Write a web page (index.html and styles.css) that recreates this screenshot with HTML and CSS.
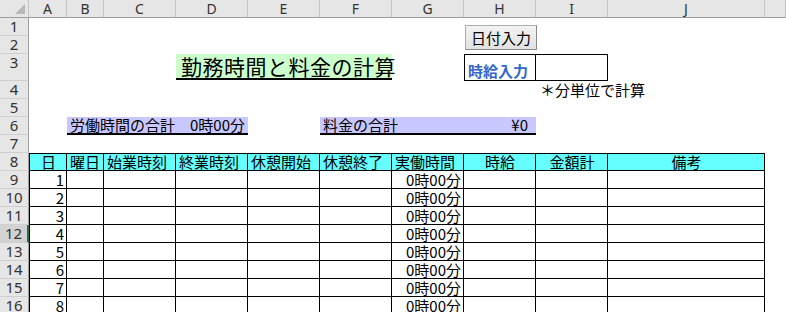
FILE: index.html
```html
<!DOCTYPE html>
<html lang="ja">
<head>
<meta charset="utf-8">
<title>勤務時間と料金の計算</title>
<link rel="stylesheet" href="styles.css">
</head>
<body>
<div class="sheet">
  <div class="row hdr">
    <div class="corner"><span class="tri"></span></div>
    <div class="ch">A</div><div class="ch">B</div><div class="ch">C</div><div class="ch">D</div><div class="ch">E</div>
    <div class="ch">F</div><div class="ch">G</div><div class="ch">H</div><div class="ch">I</div><div class="ch">J</div><div class="ch"></div>
  </div>

  <div class="row"><div class="rh">1</div><div class="rest"></div></div>
  <div class="row"><div class="rh">2</div><div class="rest"></div></div>
  <div class="row tall">
    <div class="rh">3</div>
    <div class="span3"></div>
    <div class="title span3">勤務時間と料金の計算</div>
    <div></div>
    <div class="box lbl">時給入力</div>
    <div class="box inp"></div>
  </div>
  <div class="row">
    <div class="rh">4</div>
    <div class="span8"></div>
    <div class="note span2">＊分単位で計算</div>
  </div>
  <div class="row"><div class="rh">5</div><div class="rest"></div></div>
  <div class="row">
    <div class="rh">6</div>
    <div></div>
    <div class="sum span3"><span>労働時間の合計</span><span>0時00分</span></div>
    <div></div>
    <div class="sum yen span3"><span>料金の合計</span><span>¥0</span></div>
  </div>
  <div class="row"><div class="rh">7</div><div class="rest"></div></div>

  <div class="row thead">
    <div class="rh">8</div>
    <div class="t a ctr">日</div>
    <div class="t">曜日</div>
    <div class="t">始業時刻</div>
    <div class="t">終業時刻</div>
    <div class="t">休憩開始</div>
    <div class="t">休憩終了</div>
    <div class="t">実働時間</div>
    <div class="t ctr">時給</div>
    <div class="t ctr">金額計</div>
    <div class="t ctr">備考</div>
  </div>

  <div class="row"><div class="rh">9</div><div class="t a num">1</div><div class="t"></div><div class="t"></div><div class="t"></div><div class="t"></div><div class="t"></div><div class="t num">0時00分</div><div class="t"></div><div class="t"></div><div class="t"></div></div>
  <div class="row"><div class="rh">10</div><div class="t a num">2</div><div class="t"></div><div class="t"></div><div class="t"></div><div class="t"></div><div class="t"></div><div class="t num">0時00分</div><div class="t"></div><div class="t"></div><div class="t"></div></div>
  <div class="row"><div class="rh">11</div><div class="t a num">3</div><div class="t"></div><div class="t"></div><div class="t"></div><div class="t"></div><div class="t"></div><div class="t num">0時00分</div><div class="t"></div><div class="t"></div><div class="t"></div></div>
  <div class="row"><div class="rh sel">12</div><div class="t a num">4</div><div class="t"></div><div class="t"></div><div class="t"></div><div class="t"></div><div class="t"></div><div class="t num">0時00分</div><div class="t"></div><div class="t"></div><div class="t"></div></div>
  <div class="row"><div class="rh">13</div><div class="t a num">5</div><div class="t"></div><div class="t"></div><div class="t"></div><div class="t"></div><div class="t"></div><div class="t num">0時00分</div><div class="t"></div><div class="t"></div><div class="t"></div></div>
  <div class="row"><div class="rh">14</div><div class="t a num">6</div><div class="t"></div><div class="t"></div><div class="t"></div><div class="t"></div><div class="t"></div><div class="t num">0時00分</div><div class="t"></div><div class="t"></div><div class="t"></div></div>
  <div class="row"><div class="rh">15</div><div class="t a num">7</div><div class="t"></div><div class="t"></div><div class="t"></div><div class="t"></div><div class="t"></div><div class="t num">0時00分</div><div class="t"></div><div class="t"></div><div class="t"></div></div>
  <div class="row"><div class="rh">16</div><div class="t a num">8</div><div class="t"></div><div class="t"></div><div class="t"></div><div class="t"></div><div class="t"></div><div class="t num">0時00分</div><div class="t"></div><div class="t"></div><div class="t"></div></div>

  <button class="btn" type="button">日付入力</button>
</div>
</body>
</html>
```

FILE: styles.css
```css
html, body {
  margin: 0;
  padding: 0;
  background: #ffffff;
  overflow: hidden;
}
body {
  width: 786px;
  height: 312px;
  font-family: "Noto Sans CJK JP", "Noto Sans", sans-serif;
  color: #000;
}
.sheet {
  position: relative;
  width: 786px;
}
.row {
  display: grid;
  grid-template-columns: 29px 38px 37px repeat(7, 72px) 157px 1fr;
  height: 18px;
}
.row > div {
  box-sizing: border-box;
  white-space: nowrap;
  font-size: 15px;
  line-height: 17px;
}
.row.tall { height: 27px; }

.hdr { background: #e6e6e6; }
.hdr > div {
  border-bottom: 1px solid #9d9d9d;
}
.ch {
  border-right: 1px solid #c4c4c4;
  text-align: center;
  color: #333;
  font-family: "Noto Sans", "Liberation Sans", sans-serif;
  font-size: 14px !important;
}
.corner {
  display: flex;
  justify-content: flex-end;
  align-items: flex-end;
  padding: 0 3px 3px 0;
  border-right: 1px solid #c4c4c4;
}
.tri {
  width: 10px;
  height: 10px;
  background: #b8b8b8;
  clip-path: polygon(100% 0, 100% 100%, 0 100%);
}
.rh {
  background: #e6e6e6;
  border-right: 1px solid #9d9d9d;
  border-bottom: 1px solid #cfcfcf;
  text-align: center;
  color: #333;
  font-family: "Noto Sans", "Liberation Sans", sans-serif;
}
.rh.sel {
  background: #d2d2d2;
  border-right: 2px solid #217346;
}
.rest { grid-column: 2 / -1; }
.span2 { grid-column: span 2; }
.span3 { grid-column: span 3; }
.span8 { grid-column: span 8; }

.title {
  background: #ccffcc;
  border-bottom: 2px solid #000;
  margin-bottom: 1px;
  font-size: 21px !important;
  line-height: 24px !important;
  font-weight: 400;
  padding-left: 5px;
  letter-spacing: 0.5px;
}
.box {
  border-top: 1px solid #000;
  border-bottom: 1px solid #000;
  border-right: 1px solid #000;
}
.box.lbl {
  border-left: 1px solid #000;
  color: #3366cc;
  font-weight: 700;
  padding: 7px 0 0 3px;
  line-height: 18px !important;
}
.note {
  padding-left: 4px;
}
.sum {
  background: #c8c8ff;
  border-bottom: 2px solid #000;
  display: flex;
  justify-content: space-between;
  padding: 0 3px;
  line-height: 16px !important;
}
.sum.yen { padding-right: 8px; }

.t {
  border-right: 1px solid #000;
  border-bottom: 1px solid #000;
  padding: 0 2px 0 3px;
}
.t.a { border-left: 1px solid #000; }
.thead .t {
  background: #66ffff;
  border-top: 1px solid #000;
  line-height: 16px !important;
}
.ctr { text-align: center; }
.num { text-align: right; }

.btn {
  position: absolute;
  left: 465px;
  top: 25px;
  width: 72px;
  height: 25px;
  margin: 0;
  padding: 0;
  box-sizing: border-box;
  border: 1px solid #adadad;
  border-right-color: #8a8a8a;
  border-bottom-color: #8a8a8a;
  background: linear-gradient(#f2f2f2, #e2e2e2);
  font-family: "Noto Sans CJK JP", sans-serif;
  font-size: 15px;
  line-height: 22px;
  color: #000;
}
```
